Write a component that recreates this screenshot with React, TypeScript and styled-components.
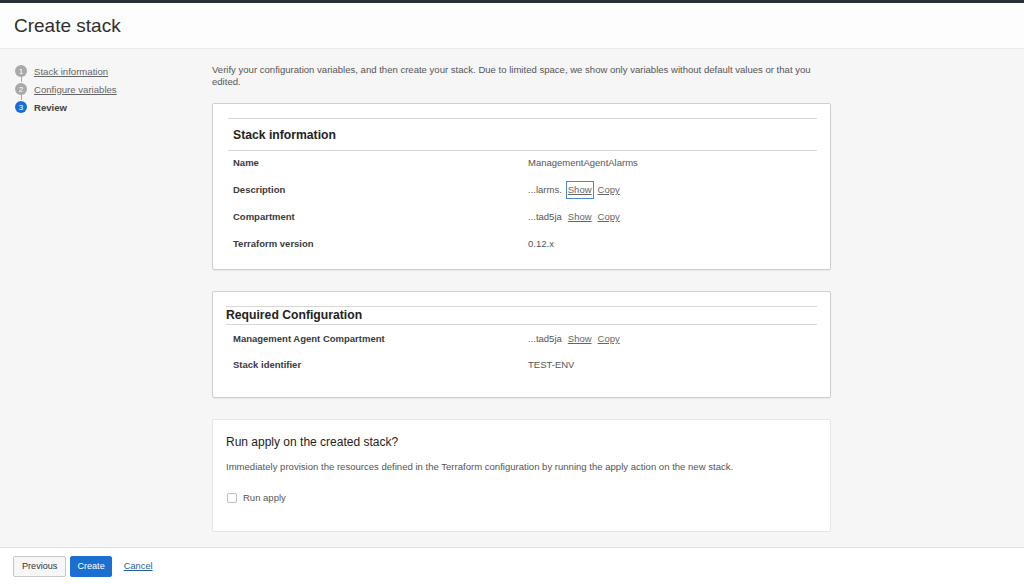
import React from "react";
import styled, { createGlobalStyle } from "styled-components";

const Global = createGlobalStyle`
  html, body, #root { height: 100%; margin: 0; padding: 0; }
  body { font-family: "Liberation Sans", Arial, sans-serif; background: #f6f6f6; overflow: hidden; }
  * { box-sizing: border-box; }
`;

const Page = styled.div`
  height: 100%;
  display: flex;
  flex-direction: column;
`;

const Header = styled.header`
  height: 49px;
  border-top: 3px solid #2b3038;
  background: #fdfdfd;
  border-bottom: 1px solid #ebebeb;
  display: flex;
  align-items: center;
  padding: 1px 0 0 14px;
  flex-shrink: 0;
`;

const Title = styled.h1`
  margin: 0;
  font-size: 19px;
  font-weight: 400;
  color: #2f2f2f;
`;

const Body = styled.div`
  flex: 1;
  display: flex;
  min-height: 0;
  overflow: hidden;
`;

const Sidebar = styled.nav`
  width: 212px;
  flex-shrink: 0;
  padding: 13px 0 0 15px;
`;

const StepList = styled.ol`
  list-style: none;
  margin: 0;
  padding: 0;
`;

const Step = styled.li`
  position: relative;
  display: flex;
  align-items: center;
  height: 18px;
  gap: 7px;
  &:not(:last-child)::after {
    content: "";
    position: absolute;
    left: 5.5px;
    top: 12px;
    width: 1px;
    height: 8px;
    background: #a8a8a8;
  }
`;

const StepNum = styled.span<{ $active?: boolean }>`
  width: 12px;
  height: 12px;
  border-radius: 50%;
  background: ${(p) => (p.$active ? "#1b6fd1" : "#a9a9a9")};
  color: #fff;
  font-size: 8px;
  display: flex;
  align-items: center;
  justify-content: center;
  flex-shrink: 0;
`;

const StepLink = styled.a`
  font-size: 9.6px;
  color: #666;
  text-decoration: underline;
  cursor: pointer;
`;

const StepCurrent = styled.span`
  font-size: 9.6px;
  font-weight: 700;
  color: #444;
`;

const Content = styled.main`
  width: 619px;
  padding-top: 15px;
  display: flex;
  flex-direction: column;
`;

const Intro = styled.p`
  margin: 0 0 15px 0;
  font-size: 9.55px;
  line-height: 12px;
  color: #555;
  padding-right: 10px;
`;

const Card = styled.section<{ $light?: boolean; $pt?: number; $pb?: number; $px?: number }>`
  background: #fff;
  border: 1px solid ${(p) => (p.$light ? "#e6e6e6" : "#cfcfcf")};
  border-radius: 2px;
  box-shadow: ${(p) => (p.$light ? "none" : "0 1px 1px rgba(0,0,0,0.05)")};
  padding: ${(p) => p.$pt ?? 14}px 13px ${(p) => p.$pb ?? 9}px ${(p) => p.$px ?? 15}px;
  margin-bottom: 21px;
`;

const CardHead = styled.div<{ $h: number; $top?: boolean }>`
  border-top: 1px solid #d6d6d6;
  border-bottom: 1px solid #d6d6d6;
  height: ${(p) => p.$h}px;
  display: flex;
  align-items: ${(p) => (p.$top ? "flex-start" : "center")};
  font-size: 12.2px;
  line-height: 14px;
  font-weight: 700;
  color: #222;
`;

const CardHeadText = styled.span<{ $indent: number; $pt: number }>`
  padding-left: ${(p) => p.$indent}px;
  padding-top: ${(p) => p.$pt}px;
`;

const Row = styled.div<{ $pt: number; $h: number; $indent: number; $valueAt: number }>`
  display: grid;
  grid-template-columns: ${(p) => p.$valueAt - p.$indent}px 1fr;
  padding-left: ${(p) => p.$indent}px;
  height: ${(p) => p.$h}px;
  padding-top: ${(p) => p.$pt}px;
  line-height: 14px;
`;

const Label = styled.span`
  font-size: 9.5px;
  font-weight: 700;
  color: #3a3a3a;
`;

const Value = styled.span`
  font-size: 9.5px;
  color: #555;
  display: flex;
  align-items: center;
  gap: 6px;
  height: 14px;
`;

const Link = styled.a<{ $focus?: boolean }>`
  color: #666;
  text-decoration: underline;
  cursor: pointer;
  padding: 1px 1px;
  margin: 0 -1px;
  outline: ${(p) => (p.$focus ? "1px solid #4a88d4" : "none")};
  outline-offset: 0;
`;

const RunTitle = styled.h2`
  margin: 0;
  font-size: 12px;
  font-weight: 400;
  color: #222;
  line-height: 16px;
`;

const RunDesc = styled.p`
  margin: 11px 0 0 0;
  font-size: 9.55px;
  line-height: 12px;
  color: #555;
`;

const CheckRow = styled.label`
  display: flex;
  align-items: center;
  gap: 6px;
  margin-top: 19px;
  padding-left: 1px;
  font-size: 9.5px;
  color: #555;
`;

const CheckBox = styled.span`
  width: 10px;
  height: 10px;
  border: 1px solid #bcbcbc;
  border-radius: 2px;
  background: #fff;
`;

const Footer = styled.footer`
  height: 37px;
  flex-shrink: 0;
  background: #fff;
  border-top: 1px solid #dedede;
  display: flex;
  align-items: center;
  padding-left: 13px;
  gap: 4px;
`;

const Button = styled.button<{ $primary?: boolean }>`
  height: 21px;
  padding: 0 ${(p) => (p.$primary ? 6 : 8)}px;
  font-family: "Liberation Sans", Arial, sans-serif;
  font-size: 9.1px;
  border-radius: 2px;
  border: 1px solid ${(p) => (p.$primary ? "#1b6fd1" : "#c8c8c8")};
  background: ${(p) => (p.$primary ? "#1b6fd1" : "#f7f7f7")};
  color: ${(p) => (p.$primary ? "#fff" : "#333")};
  cursor: pointer;
`;

const CancelLink = styled.a`
  margin-left: 8px;
  font-size: 9.3px;
  color: #1f5f9e;
  text-decoration: underline;
  cursor: pointer;
`;

const stackRows: { label: string; value: string; links?: boolean; focus?: boolean }[] = [
  { label: "Name", value: "ManagementAgentAlarms" },
  { label: "Description", value: "...larms.", links: true, focus: true },
  { label: "Compartment", value: "...tad5ja", links: true },
  { label: "Terraform version", value: "0.12.x" },
];

const reqRows: { label: string; value: string; links?: boolean }[] = [
  { label: "Management Agent Compartment", value: "...tad5ja", links: true },
  { label: "Stack identifier", value: "TEST-ENV" },
];

export default function App() {
  return (
    <Page>
      <Global />
      <Header>
        <Title>Create stack</Title>
      </Header>
      <Body>
        <Sidebar>
          <StepList>
            <Step>
              <StepNum>1</StepNum>
              <StepLink>Stack information</StepLink>
            </Step>
            <Step>
              <StepNum>2</StepNum>
              <StepLink>Configure variables</StepLink>
            </Step>
            <Step>
              <StepNum $active>3</StepNum>
              <StepCurrent>Review</StepCurrent>
            </Step>
          </StepList>
        </Sidebar>
        <Content>
          <Intro>
            Verify your configuration variables, and then create your stack. Due to limited space, we show only
            variables without default values or that you edited.
          </Intro>
          <Card $pt={14} $pb={10}>
            <CardHead $h={33}>
              <CardHeadText $indent={5} $pt={1}>Stack information</CardHeadText>
            </CardHead>
            {stackRows.map((r) => (
              <Row key={r.label} $pt={5} $h={27} $indent={5} $valueAt={300}>
                <Label>{r.label}</Label>
                <Value>
                  {r.value}
                  {r.links && (
                    <>
                      <Link $focus={r.focus}>Show</Link>
                      <Link>Copy</Link>
                    </>
                  )}
                </Value>
              </Row>
            ))}
          </Card>
          <Card $pt={14} $pb={20} $px={13}>
            <CardHead $h={19} $top>
              <CardHeadText $indent={0} $pt={1}>Required Configuration</CardHeadText>
            </CardHead>
            {reqRows.map((r) => (
              <Row key={r.label} $pt={7} $h={26} $indent={7} $valueAt={302}>
                <Label>{r.label}</Label>
                <Value>
                  {r.value}
                  {r.links && (
                    <>
                      <Link>Show</Link>
                      <Link>Copy</Link>
                    </>
                  )}
                </Value>
              </Row>
            ))}
          </Card>
          <Card $light $pt={14} $pb={28} $px={13}>
            <RunTitle>Run apply on the created stack?</RunTitle>
            <RunDesc>
              Immediately provision the resources defined in the Terraform configuration by running the apply action
              on the new stack.
            </RunDesc>
            <CheckRow>
              <CheckBox />
              Run apply
            </CheckRow>
          </Card>
        </Content>
      </Body>
      <Footer>
        <Button>Previous</Button>
        <Button $primary>Create</Button>
        <CancelLink>Cancel</CancelLink>
      </Footer>
    </Page>
  );
}
